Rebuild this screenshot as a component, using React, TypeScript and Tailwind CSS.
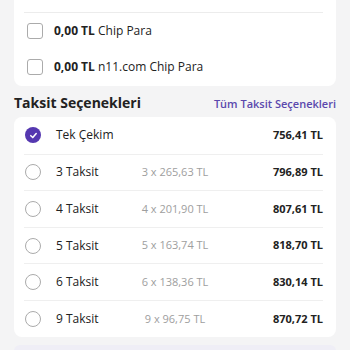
import React from 'react';

const rows = [
  { label: 'Tek Çekim', per: '', total: '756,41 TL', selected: true },
  { label: '3 Taksit', per: '3 x 265,63 TL', total: '796,89 TL' },
  { label: '4 Taksit', per: '4 x 201,90 TL', total: '807,61 TL' },
  { label: '5 Taksit', per: '5 x 163,74 TL', total: '818,70 TL' },
  { label: '6 Taksit', per: '6 x 138,36 TL', total: '830,14 TL' },
  { label: '9 Taksit', per: '9 x 96,75 TL', total: '870,72 TL' },
];

function Radio({ checked }: { checked?: boolean }) {
  if (checked) {
    return (
      <span className="flex h-[16px] w-[16px] shrink-0 items-center justify-center rounded-full bg-[#5538b0]">
        <svg width="9" height="9" viewBox="0 0 10 10" fill="none">
          <path d="M2 5.2 4.2 7.3 8 2.8" stroke="#fff" strokeWidth="1.7" strokeLinecap="round" strokeLinejoin="round" />
        </svg>
      </span>
    );
  }
  return <span className="block h-[16px] w-[16px] shrink-0 rounded-full border-[1.5px] border-[#ababab]" />;
}

function ChipRow({ name, h }: { name: string; h: string }) {
  return (
    <div className={`flex items-center gap-[11px] pl-[3px] ${h}`}>
      <span className="block h-[16px] w-[16px] rounded-[3px] border-[1.5px] border-[#ababab]" />
      <span className="text-[12px] text-[#222]">
        <b className="font-bold">0,00 TL</b> {name}
      </span>
    </div>
  );
}

export default function App() {
  return (
    <div
      className="h-[350px] w-[350px] overflow-hidden bg-[#f4f4f5] px-[14px] text-[#222]"
      style={{ fontFamily: '"Open Sans", "Noto Sans", sans-serif' }}
    >
      <div className="-mt-[20px] rounded-b-[8px] bg-white pl-[10px] pr-[13px] pt-[32px]">
        <div className="border-t border-[#ececec]" />
        <ChipRow name="Chip Para" h="h-[35px]" />
        <ChipRow name="n11.com Chip Para" h="h-[38px]" />
      </div>

      <div className="mt-[10px] flex h-[14px] items-baseline justify-between">
        <span className="text-[14px] font-bold leading-none text-[#222]">Taksit Seçenekleri</span>
        <span className="text-[11px] font-semibold leading-none text-[#5a48ad]">Tüm Taksit Seçenekleri</span>
      </div>

      <div className="mt-[7px] rounded-[8px] bg-white pl-[10px] pr-[13px]">
        {rows.map((r, i) => (
          <div
            key={r.label}
            className={`grid h-[36.6px] grid-cols-[1fr_auto_1fr] items-center ${i > 0 ? 'border-t border-[#efefef]' : ''}`}
          >
            <div className="flex items-center pl-[1px]">
              <Radio checked={r.selected} />
              <span className="ml-[15px] text-[12px] text-[#222]">{r.label}</span>
            </div>
            <span className="pl-[3px] text-center text-[11px] text-[#9e9e9e]">{r.per}</span>
            <span className="text-right text-[11px] font-bold text-[#222]">{r.total}</span>
          </div>
        ))}
      </div>

      <div className="mt-[8px] h-[20px] rounded-[6px] bg-[#efeef6]" />
    </div>
  );
}
